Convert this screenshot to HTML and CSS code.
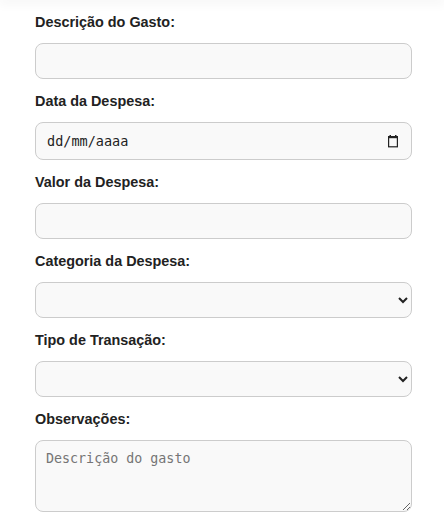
FILE: index.html
```html
<!DOCTYPE html>
<html lang="pt-BR">
<head>
<meta charset="utf-8">
<title>Despesa</title>
<link rel="stylesheet" href="styles.css">
</head>
<body>
<div class="topshade"></div>
<form class="form">
  <div class="group">
    <label class="label" for="desc">Descrição do Gasto:</label>
    <input class="field text" id="desc" type="text">
  </div>
  <div class="group">
    <label class="label" for="data">Data da Despesa:</label>
    <div class="field datefield">
      <input class="dateinput" id="data" type="text" placeholder="dd/mm/aaaa">
      <svg class="calicon" width="12" height="13" viewBox="0 0 12 13" aria-hidden="true">
        <rect x="1" y="1" width="10" height="2" fill="#222"/>
        <rect x="2.5" y="0" width="1.5" height="2" fill="#222"/>
        <rect x="8" y="0" width="1.5" height="2" fill="#222"/>
        <rect x="1.6" y="2.6" width="8.8" height="9.2" fill="none" stroke="#222" stroke-width="1.2"/>
      </svg>
    </div>
  </div>
  <div class="group">
    <label class="label" for="valor">Valor da Despesa:</label>
    <input class="field text" id="valor" type="text">
  </div>
  <div class="group">
    <label class="label" for="cat">Categoria da Despesa:</label>
    <select class="field sel" id="cat"><option></option></select>
  </div>
  <div class="group">
    <label class="label" for="tipo">Tipo de Transação:</label>
    <select class="field sel" id="tipo"><option></option></select>
  </div>
  <div class="group">
    <label class="label" for="obs">Observações:</label>
    <textarea class="field area" id="obs" placeholder="Descrição do gasto"></textarea>
  </div>
</form>
</body>
</html>
```
FILE: styles.css
```css
html, body {
  margin: 0;
  padding: 0;
  background: #ffffff;
}
.topshade {
  height: 0;
  box-shadow: 0 0 12px 2px rgba(0, 0, 0, 0.09);
}
.form {
  padding: 14px 32px 0 35px;
}
.group {
  margin-bottom: 14px;
}
.label {
  display: block;
  font-family: "Liberation Sans", Arial, sans-serif;
  font-weight: bold;
  font-size: 14.4px;
  line-height: 16px;
  color: #222;
  margin-bottom: 13px;
}
.field {
  display: block;
  width: 100%;
  box-sizing: border-box;
  font-family: "DejaVu Sans Mono", monospace;
  font-size: 13.333px;
  padding: 0 10px;
  border: 1px solid #ccc;
  border-radius: 8px;
  background: #f9f9f9;
  color: #222;
  margin: 0;
}
.text {
  height: 36px;
}
.datefield {
  height: 38px;
  display: flex;
  align-items: center;
  gap: 8px;
  padding: 0 10px 0 11px;
}
.dateinput {
  flex: 1;
  min-width: 0;
  border: 0;
  padding: 0;
  margin: 0;
  background: transparent;
  font-family: "DejaVu Sans Mono", monospace;
  font-size: 13.5px;
  color: #222;
  outline: none;
}
.dateinput::placeholder {
  color: #222;
  opacity: 1;
}
.calicon {
  display: block;
  flex: none;
  margin-right: 2px;
}
.sel {
  height: 36px;
  padding: 0 6px;
}
.area {
  height: 72px;
  padding: 10px;
}
.area::placeholder {
  color: #757575;
}
```
